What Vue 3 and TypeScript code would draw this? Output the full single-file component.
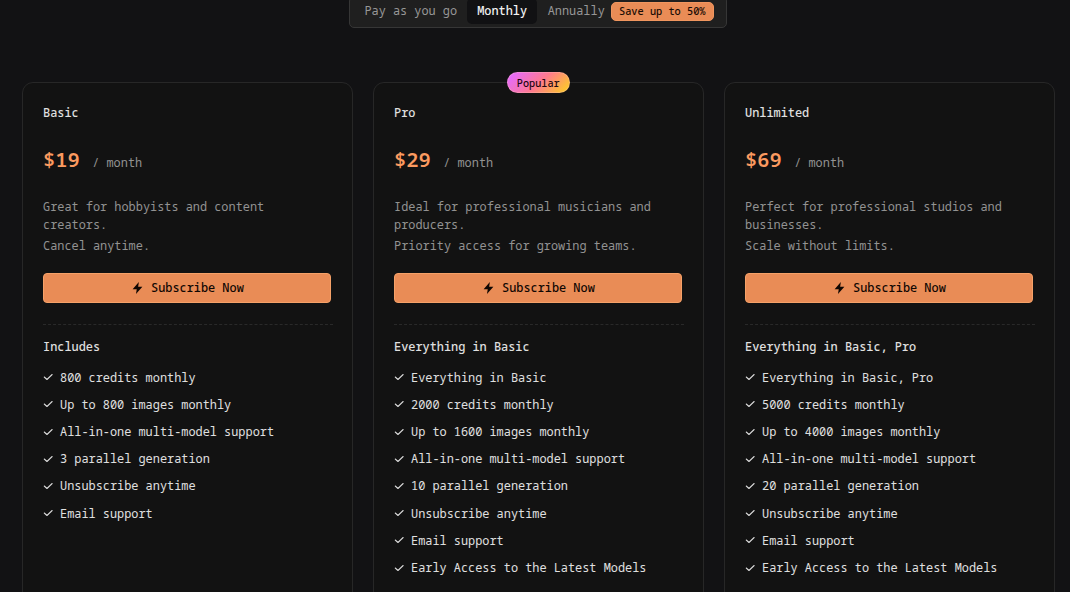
<script setup lang="ts">
interface Plan {
  name: string
  price: string
  popular?: boolean
  summary: string
  note: string
  heading: string
  features: string[]
}

const plans: Plan[] = [
  {
    name: 'Basic',
    price: '$19',
    summary: 'Great for hobbyists and content creators.',
    note: 'Cancel anytime.',
    heading: 'Includes',
    features: [
      '800 credits monthly',
      'Up to 800 images monthly',
      'All-in-one multi-model support',
      '3 parallel generation',
      'Unsubscribe anytime',
      'Email support',
    ],
  },
  {
    name: 'Pro',
    price: '$29',
    popular: true,
    summary: 'Ideal for professional musicians and producers.',
    note: 'Priority access for growing teams.',
    heading: 'Everything in Basic',
    features: [
      'Everything in Basic',
      '2000 credits monthly',
      'Up to 1600 images monthly',
      'All-in-one multi-model support',
      '10 parallel generation',
      'Unsubscribe anytime',
      'Email support',
      'Early Access to the Latest Models',
    ],
  },
  {
    name: 'Unlimited',
    price: '$69',
    summary: 'Perfect for professional studios and businesses.',
    note: 'Scale without limits.',
    heading: 'Everything in Basic, Pro',
    features: [
      'Everything in Basic, Pro',
      '5000 credits monthly',
      'Up to 4000 images monthly',
      'All-in-one multi-model support',
      '20 parallel generation',
      'Unsubscribe anytime',
      'Email support',
      'Early Access to the Latest Models',
    ],
  },
]
</script>

<template>
  <main class="page">
    <nav class="tabs">
      <button class="tab">Pay as you go</button>
      <button class="tab active">Monthly</button>
      <button class="tab annual">Annually</button>
      <span class="save">Save up to 50%</span>
    </nav>
    <section class="plans">
      <article v-for="plan in plans" :key="plan.name" class="card">
        <span v-if="plan.popular" class="popular">Popular</span>
        <h2 class="name">{{ plan.name }}</h2>
        <div class="price">
          <span class="amount">{{ plan.price }}</span>
          <span class="period">/ month</span>
        </div>
        <p class="summary">{{ plan.summary }}</p>
        <p class="note">{{ plan.note }}</p>
        <button class="subscribe">
          <svg class="bolt" viewBox="0 0 24 24"><path d="M14.5 1 3 14.2h7.6L9.2 23 21 9.8h-7.8z" /></svg>
          <span>Subscribe Now</span>
        </button>
        <hr class="rule" />
        <h3 class="heading">{{ plan.heading }}</h3>
        <ul class="features">
          <li v-for="feature in plan.features" :key="feature">
            <svg class="check" viewBox="0 0 24 24"><path d="M22 6 9.5 18 3 12" /></svg>
            <span>{{ feature }}</span>
          </li>
        </ul>
      </article>
    </section>
  </main>
</template>

<style>
body {
  background: #121214;
  overflow: hidden;
}
</style>

<style scoped>
.page {
  box-sizing: border-box;
  height: 592px;
  overflow: hidden;
  background: #121214;
  color: #e0e0e0;
  font: 11.9px/17px "Noto Sans Mono", "DejaVu Sans Mono", monospace;
}
h2, h3, p, ul {
  margin: 0;
  padding: 0;
  font-size: inherit;
  font-weight: 500;
}
p, ul { font-weight: 400; }
button {
  border: 0;
  padding: 0;
  background: none;
  color: inherit;
  font: inherit;
}
.tabs {
  box-sizing: border-box;
  display: flex;
  align-items: center;
  width: 378px;
  height: 32px;
  margin: -4px 0 0 349px;
  padding: 0 13px 0 5px;
  border: 1px solid #363636;
  border-radius: 5px;
  background: #1f1f1f;
}
.tab {
  height: 26px;
  margin-top: -2px;
  padding: 0 10px 1px;
  border-radius: 5px;
  color: #979797;
  white-space: nowrap;
}
.tab:first-child { padding-left: 9.4px; }
.tab.active {
  background: #111113;
  color: #f2f2f2;
  font-weight: 500;
}
.tab.annual {
  padding-left: 10.6px;
  padding-right: 6px;
}
.save {
  box-sizing: border-box;
  flex: none;
  width: 103px;
  height: 19px;
  margin-top: -2px;
  border: 1px solid #f0965f;
  border-radius: 5px;
  background: #e98c56;
  color: #180b04;
  font-size: 10.3px;
  font-weight: 500;
  line-height: 17px;
  text-align: center;
  white-space: nowrap;
}
.plans {
  display: grid;
  grid-template-columns: repeat(3, 331px);
  gap: 20px;
  margin: 54px 0 0 22px;
}
.card {
  position: relative;
  box-sizing: border-box;
  height: 540px;
  padding: 21px 20px;
  border: 1px solid #272727;
  border-radius: 11px;
  background: #121212;
}
.popular {
  position: absolute;
  top: -11px;
  left: 132.5px;
  box-sizing: border-box;
  width: 63.5px;
  height: 21px;
  border: 1px solid rgba(255, 190, 190, 0.35);
  border-radius: 11px;
  background: linear-gradient(135deg, #e66bfa 10%, #ff7a8e 52%, #fcc72c 92%) border-box;
  color: #1d0710;
  font-size: 10.2px;
  font-weight: 500;
  line-height: 20px;
  text-align: center;
}
.price {
  display: flex;
  align-items: baseline;
  gap: 12.5px;
  height: 28px;
  margin-top: 24px;
  line-height: 28px;
}
.amount {
  color: #fb9a60;
  font-size: 20.4px;
  font-weight: 600;
}
.period { color: #939393; }
.summary, .note { color: #939393; }
.summary {
  margin-top: 25px;
  line-height: 17.5px;
}
.note { margin-top: 4px; }
.subscribe {
  box-sizing: border-box;
  display: flex;
  align-items: center;
  justify-content: center;
  gap: 7px;
  width: 288px;
  height: 30px;
  margin-top: 19px;
  margin-left: 0.4px;
  padding-bottom: 1px;
  border: 1px solid #f5a168;
  border-radius: 4px;
  background: #e98c56;
  color: #100703;
  font-weight: 500;
}
.bolt {
  width: 13px;
  height: 14px;
  margin-top: 1px;
  fill: currentColor;
}
.rule {
  width: 290px;
  margin: 21px 0 0;
  border: 0;
  border-top: 1px dashed #292929;
}
.heading { margin-top: 13px; }
.features {
  margin-top: 8.6px;
  list-style: none;
}
.features li {
  display: flex;
  align-items: center;
  gap: 7px;
  height: 27.2px;
}
.check {
  width: 10px;
  height: 10px;
  fill: none;
  stroke: #dcdcdc;
  stroke-width: 2.5;
  stroke-linecap: round;
  stroke-linejoin: round;
}
</style>
